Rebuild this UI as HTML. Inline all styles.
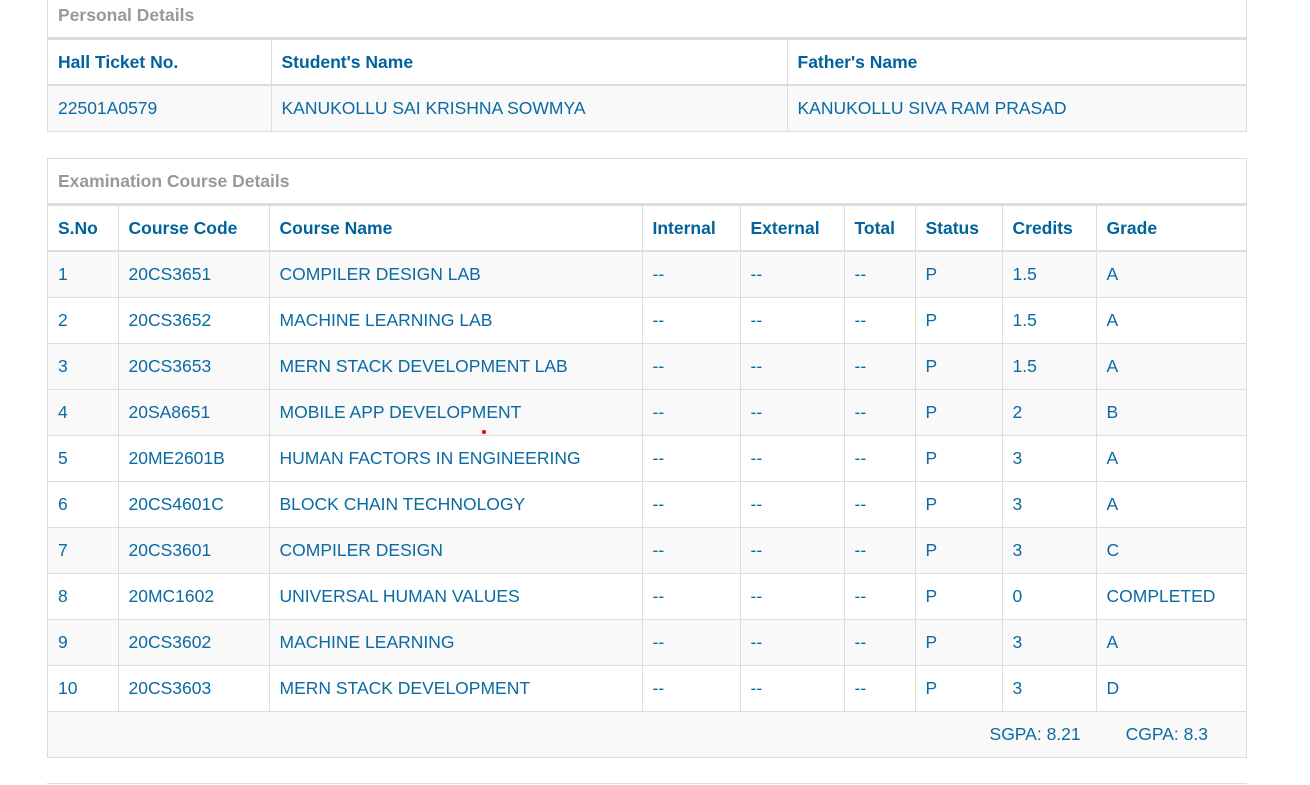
<!DOCTYPE html>
<html><head><meta charset="utf-8"><style>
body{margin:0;background:#fff;font-family:"Liberation Sans",Arial,sans-serif;font-size:17.5px;color:#0a6aa1;}
.box{position:absolute;left:47px;width:1198px;border:1px solid #ddd;}
.title{height:44px;line-height:44px;padding-left:10px;color:#999;font-weight:bold;border-bottom:2px solid #ddd;}
table{border-collapse:collapse;width:100%;table-layout:fixed;}
td,th{border:1px solid #ddd;height:45px;padding:0 0 0 10px;text-align:left;vertical-align:middle;}
th{color:#00639c;font-weight:bold;border-bottom:2px solid #ddd;height:44px;}
tr td:first-child,tr th:first-child{border-left:none}
tr td:last-child,tr th:last-child{border-right:none}
tr:last-child td{border-bottom:none}
tr.g td{background:#f9f9f9}
.foot{background:#f9f9f9;height:45px;line-height:45px;text-align:right;padding-right:38px;border-top:1px solid #ddd}
</style></head><body>
<div class="box" style="top:-8px">
<div class="title">Personal Details</div>
<table><colgroup><col style="width:223px"><col style="width:516px"><col></colgroup>
<tr><th>Hall Ticket No.</th><th>Student's Name</th><th>Father's Name</th></tr>
<tr class="g"><td>22501A0579</td><td>KANUKOLLU SAI KRISHNA SOWMYA</td><td>KANUKOLLU SIVA RAM PRASAD</td></tr>
</table></div>
<div class="box" style="top:158px">
<div class="title">Examination Course Details</div>
<table><colgroup><col style="width:70px"><col style="width:151px"><col style="width:373px"><col style="width:98px"><col style="width:104px"><col style="width:71px"><col style="width:87px"><col style="width:94px"><col></colgroup>
<tr><th>S.No</th><th>Course Code</th><th>Course Name</th><th>Internal</th><th>External</th><th>Total</th><th>Status</th><th>Credits</th><th>Grade</th></tr>
<tr class="g"><td>1</td><td>20CS3651</td><td>COMPILER DESIGN LAB</td><td>--</td><td>--</td><td>--</td><td>P</td><td>1.5</td><td>A</td></tr>
<tr><td>2</td><td>20CS3652</td><td>MACHINE LEARNING LAB</td><td>--</td><td>--</td><td>--</td><td>P</td><td>1.5</td><td>A</td></tr>
<tr class="g"><td>3</td><td>20CS3653</td><td>MERN STACK DEVELOPMENT LAB</td><td>--</td><td>--</td><td>--</td><td>P</td><td>1.5</td><td>A</td></tr>
<tr class="g"><td>4</td><td>20SA8651</td><td>MOBILE APP DEVELOPMENT</td><td>--</td><td>--</td><td>--</td><td>P</td><td>2</td><td>B</td></tr>
<tr><td>5</td><td>20ME2601B</td><td>HUMAN FACTORS IN ENGINEERING</td><td>--</td><td>--</td><td>--</td><td>P</td><td>3</td><td>A</td></tr>
<tr><td>6</td><td>20CS4601C</td><td>BLOCK CHAIN TECHNOLOGY</td><td>--</td><td>--</td><td>--</td><td>P</td><td>3</td><td>A</td></tr>
<tr class="g"><td>7</td><td>20CS3601</td><td>COMPILER DESIGN</td><td>--</td><td>--</td><td>--</td><td>P</td><td>3</td><td>C</td></tr>
<tr><td>8</td><td>20MC1602</td><td>UNIVERSAL HUMAN VALUES</td><td>--</td><td>--</td><td>--</td><td>P</td><td>0</td><td>COMPLETED</td></tr>
<tr class="g"><td>9</td><td>20CS3602</td><td>MACHINE LEARNING</td><td>--</td><td>--</td><td>--</td><td>P</td><td>3</td><td>A</td></tr>
<tr><td>10</td><td>20CS3603</td><td>MERN STACK DEVELOPMENT</td><td>--</td><td>--</td><td>--</td><td>P</td><td>3</td><td>D</td></tr>
</table>
<div class="foot">SGPA: 8.21<span style="display:inline-block;width:45px"></span>CGPA: 8.3</div>
</div>
<div style="position:absolute;left:47px;top:783px;width:1200px;height:1px;background:#ddd"></div>
<div style="position:absolute;left:482px;top:430px;width:4px;height:4px;border-radius:2px;background:#e00"></div>
</body></html>
